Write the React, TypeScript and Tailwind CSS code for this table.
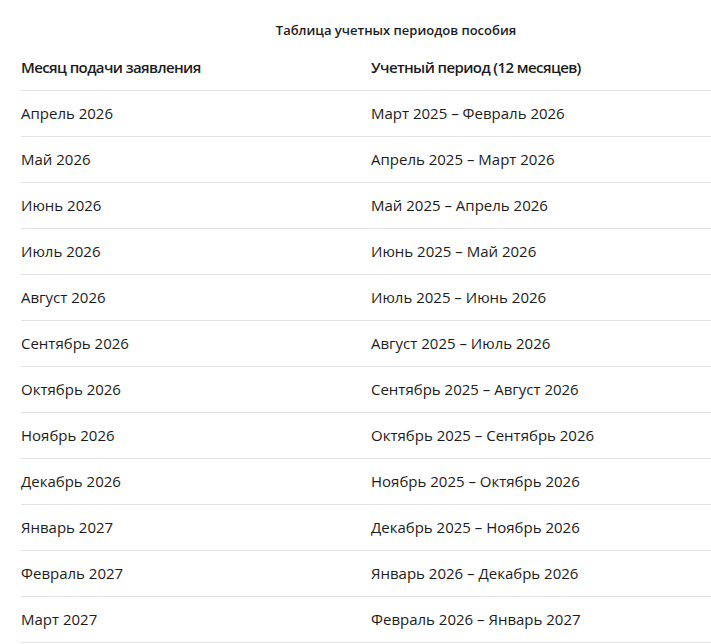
const rows: [string, string][] = [
  ["Апрель 2026", "Март 2025 – Февраль 2026"],
  ["Май 2026", "Апрель 2025 – Март 2026"],
  ["Июнь 2026", "Май 2025 – Апрель 2026"],
  ["Июль 2026", "Июнь 2025 – Май 2026"],
  ["Август 2026", "Июль 2025 – Июнь 2026"],
  ["Сентябрь 2026", "Август 2025 – Июль 2026"],
  ["Октябрь 2026", "Сентябрь 2025 – Август 2026"],
  ["Ноябрь 2026", "Октябрь 2025 – Сентябрь 2026"],
  ["Декабрь 2026", "Ноябрь 2025 – Октябрь 2026"],
  ["Январь 2027", "Декабрь 2025 – Ноябрь 2026"],
  ["Февраль 2027", "Январь 2026 – Декабрь 2026"],
  ["Март 2027", "Февраль 2026 – Январь 2027"],
];

export default function App() {
  return (
    <div className="w-[711px] h-[644px] overflow-hidden bg-white font-['Open_Sans',sans-serif] text-[#1c1c1c]">
      <div className="w-[750px] ml-[21px]">
        {/* Caption */}
        <div className="pt-5 h-[45px] text-center text-[13px] leading-5 font-semibold">
          Таблица учетных периодов пособия
        </div>

        {/* Header */}
        <div className="grid grid-cols-[350px_1fr] h-[46px] items-center border-b border-[#e3e3e3] text-[15px] font-semibold tracking-[-0.6px]">
          <div>Месяц подачи заявления</div>
          <div>Учетный период (12 месяцев)</div>
        </div>

        {rows.map(([month, period]) => (
          <div
            key={month}
            className="grid grid-cols-[350px_1fr] h-[46px] items-center border-b border-[#e3e3e3] text-[15px]"
          >
            <div>{month}</div>
            <div>{period}</div>
          </div>
        ))}
      </div>
    </div>
  );
}
